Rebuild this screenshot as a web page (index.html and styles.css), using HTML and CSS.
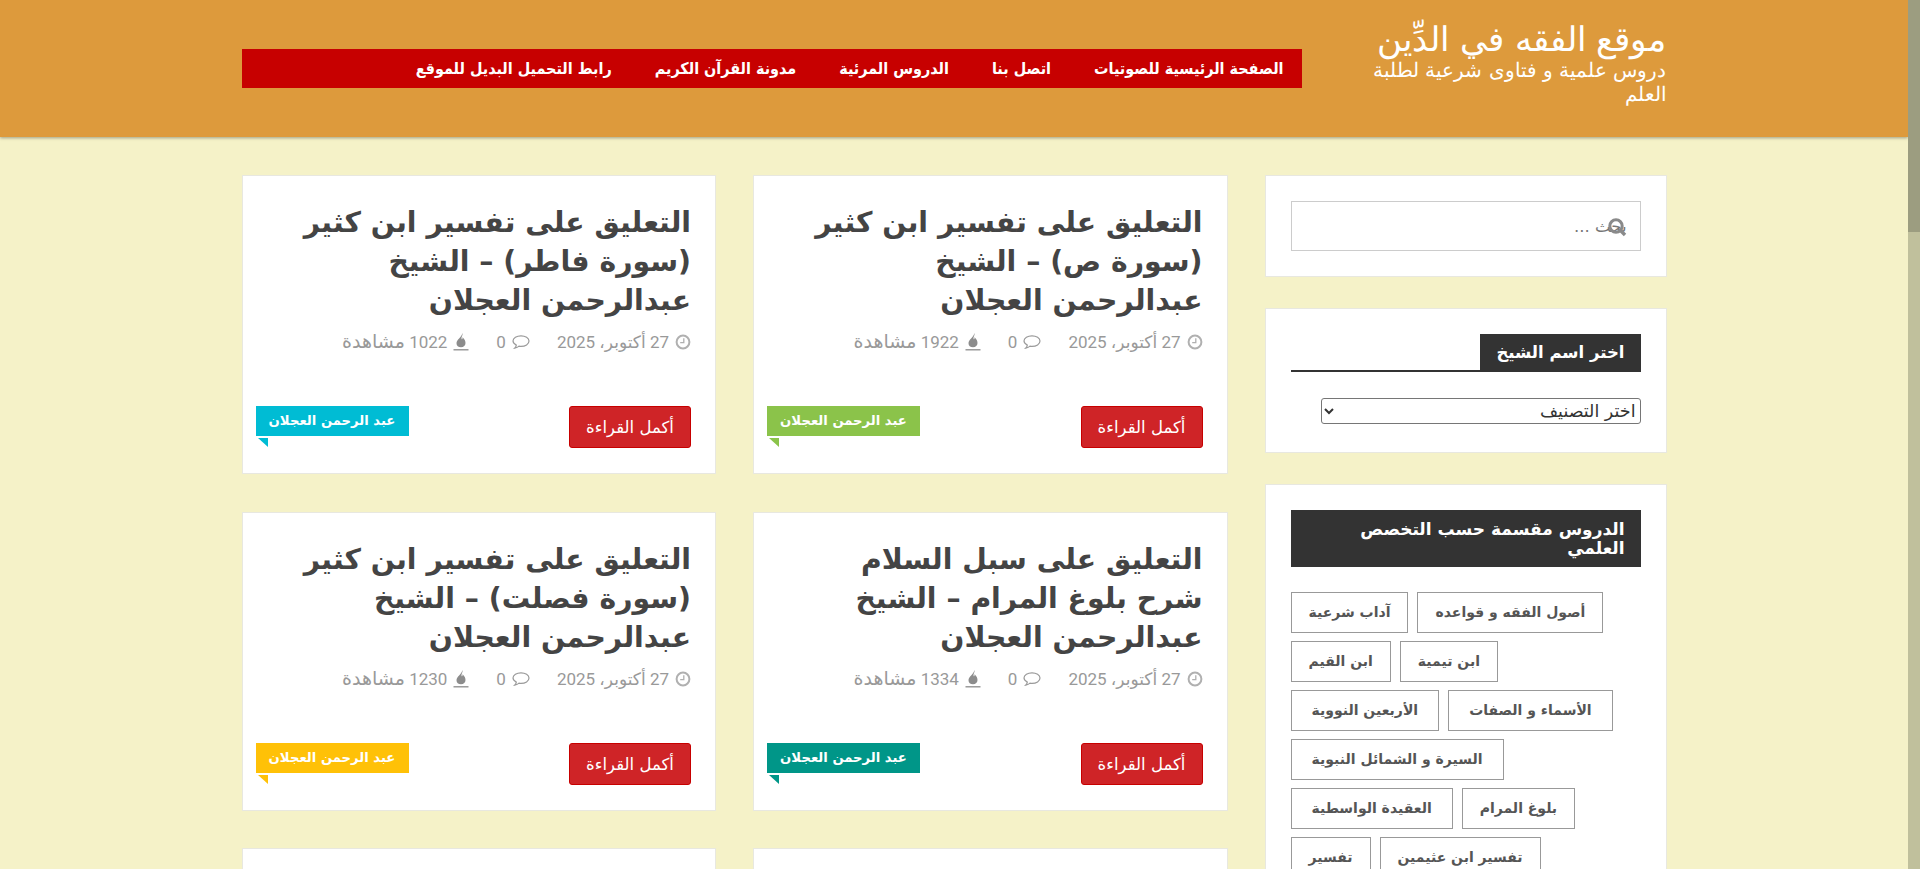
FILE: index.html
```html
<!DOCTYPE html>
<html lang="ar">
<head>
<meta charset="utf-8">
<title>موقع الفقه في الدِّين</title>
<link rel="stylesheet" href="styles.css">
</head>
<body>
<svg class="sprite" aria-hidden="true">
  <symbol id="i-clock" viewBox="0 0 16 16"><circle cx="8" cy="8" r="6.400" fill="none" stroke="#b0b0b0" stroke-width="2"/><path d="M8.800 4.200v4.500H5.200" fill="none" stroke="#b0b0b0" stroke-width="1.300"/></symbol>
  <symbol id="i-comment" viewBox="0 0 18 16"><path d="M9 1.800c4.300 0 8 2.200 8 5.300s-3.700 5.300-8 5.300c-.7 0-1.300 0-2-.2-1 1-2.600 1.700-4.300 2 .9-.9 1.500-1.900 1.600-3.100C2.500 10.200 1 8.800 1 7.100 1 4 4.700 1.800 9 1.800z" fill="none" stroke="#9a9a9a" stroke-width="1.200"/></symbol>
  <symbol id="i-fire" viewBox="0 0 16 18"><path d="M9.500 0C10 3 7.500 4 9 6.500c.5-.8.700-1.500.6-2.300C11.500 6 12.500 8 12.500 10c0 2.500-1.800 4.300-4.500 4.300S3.500 12.700 3.500 10.300C3.500 6.500 8.500 4.500 9.500 0z" fill="#8c8c8c"/><path d="M.5 16.800h15" stroke="#8c8c8c" stroke-width="1.300"/></symbol>
</svg>
<div class="page">
<header class="site-header">
  <div class="container header-row">
    <div class="branding">
      <h1 class="site-title">موقع الفقه في الدِّين</h1>
      <p class="site-desc">دروس علمية و فتاوى شرعية لطلبة العلم</p>
    </div>
    <nav class="main-nav">
      <a href="#">الصفحة الرئيسية للصوتيات</a>
      <a href="#">اتصل بنا</a>
      <a href="#">الدروس المرئية</a>
      <a href="#">مدونة القرآن الكريم</a>
      <a href="#">رابط التحميل البديل للموقع</a>
    </nav>
  </div>
</header>
<main class="container content">
  <aside class="sidebar">
    <section class="widget search-widget">
      <div class="search-box"><span class="search-text">بحث ...</span>
        <svg class="search-icon" viewBox="0 0 20 20" width="20" height="20"><circle cx="9" cy="9" r="6.200" fill="none" stroke="#8a8a8a" stroke-width="3"/><path d="M13 13l5 5" stroke="#8a8a8a" stroke-width="3.400"/></svg>
      </div>
    </section>
    <section class="widget cat-widget">
      <div class="widget-head"><h3 class="widget-title">اختر اسم الشيخ</h3></div>
      <select class="cat-select"><option>اختر التصنيف</option></select>
    </section>
    <section class="widget tags-widget">
      <h3 class="widget-title wide">الدروس مقسمة حسب التخصص العلمي</h3>
      <div class="tags">
        <a class="tag" href="#">آداب شرعية</a><a class="tag" href="#">أصول الفقه و قواعده</a>
        <a class="tag" href="#">ابن القيم</a><a class="tag" href="#">ابن تيمية</a>
        <a class="tag tag-roomy" href="#">الأربعين النووية</a><a class="tag tag-roomy" href="#">الأسماء و الصفات</a>
        <a class="tag tag-roomy" href="#">السيرة و الشمائل النبوية</a>
        <a class="tag tag-roomy" href="#">العقيدة الواسطية</a><a class="tag" href="#">بلوغ المرام</a>
        <a class="tag" href="#">تفسير</a><a class="tag" href="#">تفسير ابن عثيمين</a>
      </div>
    </section>
  </aside>
  <div class="cards">
    <article class="card">
      <h2 class="card-title">التعليق على تفسير ابن كثير (سورة ص) – الشيخ عبدالرحمن العجلان</h2>
      <div class="meta">
        <span class="meta-item"><svg class="ico"><use href="#i-clock"/></svg>27 أكتوبر، 2025</span>
        <span class="meta-item"><svg class="ico wide-ico"><use href="#i-comment"/></svg>0</span>
        <span class="meta-item"><svg class="ico tall-ico"><use href="#i-fire"/></svg><span>1922 <span class="views-word">مشاهدة</span></span></span>
      </div>
      <div class="card-foot">
        <a class="more-btn" href="#">أكمل القراءة</a>
        <span class="cat-label green">عبد الرحمن العجلان</span>
      </div>
    </article>
    <article class="card">
      <h2 class="card-title">التعليق على تفسير ابن كثير (سورة فاطر) – الشيخ عبدالرحمن العجلان</h2>
      <div class="meta">
        <span class="meta-item"><svg class="ico"><use href="#i-clock"/></svg>27 أكتوبر، 2025</span>
        <span class="meta-item"><svg class="ico wide-ico"><use href="#i-comment"/></svg>0</span>
        <span class="meta-item"><svg class="ico tall-ico"><use href="#i-fire"/></svg><span>1022 <span class="views-word">مشاهدة</span></span></span>
      </div>
      <div class="card-foot">
        <a class="more-btn" href="#">أكمل القراءة</a>
        <span class="cat-label cyan">عبد الرحمن العجلان</span>
      </div>
    </article>
    <article class="card">
      <h2 class="card-title">التعليق على سبل السلام شرح بلوغ المرام – الشيخ عبدالرحمن العجلان</h2>
      <div class="meta">
        <span class="meta-item"><svg class="ico"><use href="#i-clock"/></svg>27 أكتوبر، 2025</span>
        <span class="meta-item"><svg class="ico wide-ico"><use href="#i-comment"/></svg>0</span>
        <span class="meta-item"><svg class="ico tall-ico"><use href="#i-fire"/></svg><span>1334 <span class="views-word">مشاهدة</span></span></span>
      </div>
      <div class="card-foot">
        <a class="more-btn" href="#">أكمل القراءة</a>
        <span class="cat-label teal">عبد الرحمن العجلان</span>
      </div>
    </article>
    <article class="card">
      <h2 class="card-title">التعليق على تفسير ابن كثير (سورة فصلت) – الشيخ عبدالرحمن العجلان</h2>
      <div class="meta">
        <span class="meta-item"><svg class="ico"><use href="#i-clock"/></svg>27 أكتوبر، 2025</span>
        <span class="meta-item"><svg class="ico wide-ico"><use href="#i-comment"/></svg>0</span>
        <span class="meta-item"><svg class="ico tall-ico"><use href="#i-fire"/></svg><span>1230 <span class="views-word">مشاهدة</span></span></span>
      </div>
      <div class="card-foot">
        <a class="more-btn" href="#">أكمل القراءة</a>
        <span class="cat-label amber">عبد الرحمن العجلان</span>
      </div>
    </article>
    <article class="card"></article>
    <article class="card"></article>
  </div>
</main>
</div>
<div class="scrollbar"><div class="thumb"></div></div>
</body>
</html>
```
FILE: styles.css
```css
* { box-sizing: border-box; }
html, body { margin: 0; height: 869px; overflow: hidden; }
body { display: flex; background: #f5f2c8; font-family: Roboto, "DejaVu Sans", sans-serif; color: #444; }
.sprite { display: none; }
.page { flex: 1; min-width: 0; height: 869px; overflow: hidden; }
.scrollbar { width: 12px; height: 869px; background: #c0c09c; flex: none; }
.thumb { height: 232px; background: #9c9d80; }
.container { width: 1425px; margin: 0 auto; }
.site-header { height: 137px; background: #dd9a3c; box-shadow: 0 1px 3px rgba(0,0,0,.35); }
.header-row { display: flex; direction: rtl; align-items: flex-start; }
.branding { width: 300px; flex: none; padding-top: 19px; color: #fff; text-align: right; margin-left: 65px; }
.site-title { margin: 0; font: 200 34.200px/40px "DejaVu Sans", sans-serif; white-space: nowrap; }
.site-desc { margin: 0; font: 200 19.800px/24px "DejaVu Sans", sans-serif; }
.main-nav { width: 1060px; height: 39px; margin-top: 49px; background: #c70000; display: flex; align-items: center; gap: 43px; padding-right: 18px; direction: rtl; }
.main-nav a { color: #fff; font: 700 16px/39px "DejaVu Sans Condensed", "DejaVu Sans", sans-serif; text-decoration: none; white-space: nowrap; }
.content { display: flex; direction: rtl; gap: 37px; padding-top: 38px; align-items: flex-start; }
.sidebar { width: 402px; flex: none; display: flex; flex-direction: column; gap: 31px; }
.widget { background: #fff; border: 1px solid #e8e8e0; padding: 25px; }
.search-widget { height: 102px; }
.search-box { height: 50px; border: 1px solid #ccc; display: flex; align-items: center; padding-right: 13px; position: relative; }
.search-text { font: 16.500px "DejaVu Sans", sans-serif; color: #777; }
.search-icon { position: absolute; right: 13px; top: 15px; }
.cat-widget { height: 145px; }
.widget-head { border-bottom: 2px solid #333; display: flex; }
.widget-title { margin: 0; background: #333; color: #fff; font: 700 16.500px/19px "DejaVu Sans", sans-serif; padding: 9px 16px 8px; }
.cat-select { display: block; width: 320px; height: 26px; margin: 26px 0 0 auto; direction: rtl; font: 17.500px "DejaVu Sans", sans-serif; background: #fff; color: #333; border: 1px solid #767676; border-radius: 3px; }
.widget-title.wide { font-size: 17px; padding: 10px 16px 9px; }
.tags { display: flex; flex-wrap: wrap; direction: ltr; gap: 8px 9px; margin-top: 25px; }
.tag { direction: rtl; height: 41px; border: 1px solid #999; padding: 0 17px; font: 700 14px/39px "DejaVu Sans", sans-serif; color: #555; text-decoration: none; white-space: nowrap; }
.tag-roomy { padding: 0 20px; }
.cards { flex: 1; min-width: 0; display: grid; grid-template-columns: repeat(2, 474.500px); grid-template-rows: 299px 299px 299px; gap: 37.500px 37px; align-content: start; }
.card { background: #fff; border: 1px solid #e8e8e0; padding: 27px 24px 25px 26px; display: flex; flex-direction: column; }
.card-title { margin: 0; max-width: 405px; font: 700 28.300px/39px "DejaVu Sans", sans-serif; color: #444; }
.meta { display: flex; gap: 27px; margin-top: 10px; font: 17px/24px Roboto, "DejaVu Sans", sans-serif; color: #999; }
.meta-item { display: flex; align-items: center; gap: 6px; }
.views-word { font-size: 19px; }
.ico { width: 16px; height: 16px; flex: none; }
.wide-ico { width: 18px; }
.tall-ico { height: 18px; }
.card-foot { margin-top: auto; display: flex; justify-content: space-between; align-items: flex-start; margin-left: -13px; }
.more-btn { width: 122px; height: 42px; background: #cf2427; border: 1px solid #c70000; border-radius: 3px; color: #fff; text-align: center; font: 16.500px/41px "DejaVu Sans", sans-serif; text-decoration: none; }
.cat-label { position: relative; width: 153px; height: 30px; color: #fff; text-align: center; font: 700 13.200px/30px "DejaVu Sans", sans-serif; }
.cat-label::after { content: ""; position: absolute; left: 2px; top: 32px; border-style: solid; border-width: 0 10px 9px 0; border-color: transparent; border-top: 0; }
.green { background: #8bc34a; } .green::after { border-right-color: #8bc34a; }
.cyan { background: #00bcd4; } .cyan::after { border-right-color: #00bcd4; }
.teal { background: #009688; } .teal::after { border-right-color: #009688; }
.amber { background: #ffc107; } .amber::after { border-right-color: #ffc107; }
```
